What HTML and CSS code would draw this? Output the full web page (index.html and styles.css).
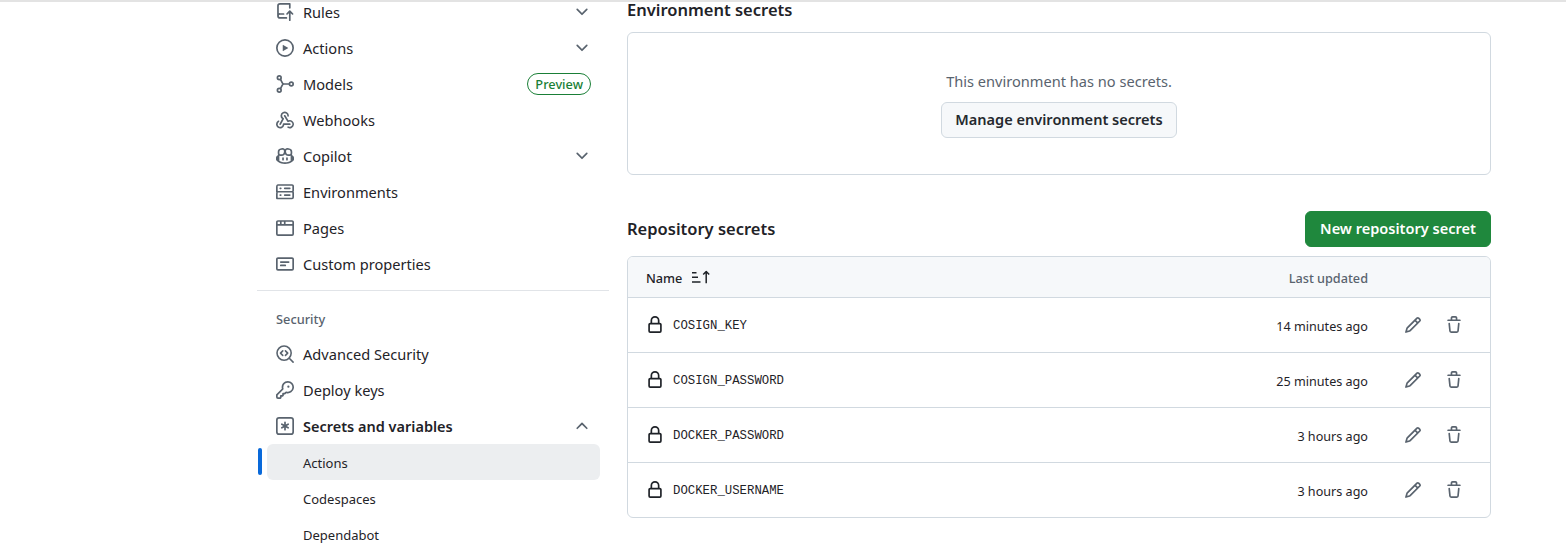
FILE: index.html
```html
<!DOCTYPE html>
<html lang="en">
<head>
  <meta charset="UTF-8" />
  <title>Actions secrets</title>
  <link rel="stylesheet" href="styles.css">
</head>
<body>

  <svg class="sprite" xmlns="http://www.w3.org/2000/svg">
    <symbol id="i-down" viewBox="0 0 16 16"><path d="M12.78 5.22a.749.749 0 0 1 0 1.06l-4.25 4.25a.749.749 0 0 1-1.06 0L3.22 6.28a.749.749 0 1 1 1.06-1.06L8 8.939l3.72-3.719a.749.749 0 0 1 1.06 0Z"/></symbol>
    <symbol id="i-up" viewBox="0 0 16 16"><path d="M3.22 10.53a.749.749 0 0 1 0-1.06l4.25-4.25a.749.749 0 0 1 1.06 0l4.25 4.25a.749.749 0 1 1-1.06 1.06L8 6.811 4.28 10.53a.749.749 0 0 1-1.06 0Z"/></symbol>
    <symbol id="i-rules" viewBox="0 0 16 16"><path d="M1 2.5A2.5 2.5 0 0 1 3.5 0h8.75a.75.75 0 0 1 .75.75v3.5a.75.75 0 0 1-1.5 0V1.5h-8a1 1 0 0 0-1 1v6.708A2.493 2.493 0 0 1 3.5 9h3.25a.75.75 0 0 1 0 1.5H3.5a1 1 0 0 0 0 2h5.75a.75.75 0 0 1 0 1.5H3.5A2.5 2.5 0 0 1 1 11.5Zm13.23 7.79h-.001l-1.224-1.224v6.184a.75.75 0 0 1-1.5 0V9.066L10.28 10.29a.75.75 0 0 1-1.06-1.06l2.505-2.504a.75.75 0 0 1 1.06 0L15.29 9.23a.75.75 0 0 1-1.06 1.06Z"/></symbol>
    <symbol id="i-play" viewBox="0 0 16 16"><path d="M8 0a8 8 0 1 1 0 16A8 8 0 0 1 8 0ZM1.5 8a6.5 6.5 0 1 0 13 0 6.5 6.5 0 0 0-13 0Zm4.879-2.773 4.264 2.559a.25.25 0 0 1 0 .428l-4.264 2.559A.25.25 0 0 1 6 10.559V5.442a.25.25 0 0 1 .379-.215Z"/></symbol>
    <symbol id="i-models" viewBox="0 0 16 16"><g fill="none" stroke="currentColor" stroke-width="1.5"><circle cx="2.9" cy="2.4" r="1.65"/><circle cx="2.9" cy="13.6" r="1.65"/><circle cx="13.6" cy="8" r="1.65"/><path d="M3.9 3.7 5.6 7c.3.6.7 1 1.4 1h4.9M3.9 12.3 5.6 9c.3-.6.7-1 1.4-1"/></g></symbol>
    <symbol id="i-webhook" viewBox="0 0 16 16"><path d="M5.5 4.25a2.25 2.25 0 0 1 4.5 0 .75.75 0 0 0 1.5 0 3.75 3.75 0 1 0-6.14 2.889l-2.272 4.258a.75.75 0 0 0 1.324.706L7 7.25a.75.75 0 0 0-.309-1.015A2.25 2.25 0 0 1 5.5 4.25Z"/><path d="M7.364 3.607a.75.75 0 0 1 1.03.257l2.608 4.349a3.75 3.75 0 1 1-.628 6.785.75.75 0 0 1 .752-1.299 2.25 2.25 0 1 0-.033-3.88.75.75 0 0 1-1.03-.256L7.107 4.636a.75.75 0 0 1 .257-1.03Z"/><path d="M2.9 8.776A.75.75 0 0 1 2.625 9.8 2.25 2.25 0 1 0 6 11.75a.75.75 0 0 1 .75-.751h5.5a.75.75 0 0 1 0 1.5H7.425a3.751 3.751 0 1 1-5.55-3.998.75.75 0 0 1 1.024.274Z"/></symbol>
    <symbol id="i-copilot" viewBox="0 0 16 16"><path d="M7.998 15.035c-4.562 0-7.873-2.914-7.998-3.749V9.338c.085-.628.677-1.686 1.588-2.065.013-.07.024-.143.036-.218.029-.183.06-.384.126-.612-.201-.508-.254-1.084-.254-1.656 0-.87.128-1.769.693-2.484.579-.733 1.494-1.124 2.724-1.261 1.206-.134 2.262.034 2.944.765.05.053.096.108.139.165.044-.057.094-.112.143-.165.682-.731 1.738-.899 2.944-.765 1.23.137 2.145.528 2.724 1.261.566.715.693 1.614.693 2.484 0 .572-.053 1.148-.254 1.656.066.228.098.429.126.612.012.076.024.148.037.218.924.385 1.522 1.471 1.591 2.095v1.872c0 .766-3.351 3.795-8.002 3.795Zm0-1.485c2.28 0 4.584-1.11 5.002-1.433V7.862l-.023-.116c-.49.21-1.075.291-1.727.291-1.146 0-2.059-.327-2.71-.991A3.222 3.222 0 0 1 8 6.303a3.24 3.24 0 0 1-.544.743c-.65.664-1.563.991-2.71.991-.652 0-1.236-.081-1.727-.291l-.023.116v4.255c.419.323 2.722 1.433 5.002 1.433ZM6.762 2.83c-.193-.206-.637-.413-1.682-.297-1.019.113-1.479.404-1.713.7-.247.312-.369.789-.369 1.554 0 .793.129 1.171.308 1.371.162.181.519.379 1.442.379.853 0 1.339-.235 1.638-.54.315-.322.527-.827.617-1.553.117-.935-.037-1.395-.241-1.614Zm4.155-.297c-1.044-.116-1.488.091-1.681.297-.204.219-.359.679-.242 1.614.091.726.303 1.231.618 1.553.299.305.784.54 1.638.54.922 0 1.28-.198 1.442-.379.179-.2.308-.578.308-1.371 0-.765-.123-1.242-.37-1.554-.233-.296-.693-.587-1.713-.7Z"/><path d="M6.25 9.037a.75.75 0 0 1 .75.75v1.501a.75.75 0 0 1-1.5 0V9.787a.75.75 0 0 1 .75-.75Zm4.25.75v1.501a.75.75 0 0 1-1.5 0V9.787a.75.75 0 0 1 1.5 0Z"/></symbol>
    <symbol id="i-server" viewBox="0 0 16 16"><path d="M1.75 1h12.5c.966 0 1.75.784 1.75 1.75v4c0 .372-.116.717-.314 1 .198.283.314.628.314 1v4a1.75 1.75 0 0 1-1.75 1.75H1.75A1.75 1.75 0 0 1 0 13.75v-4c0-.372.116-.717.314-1a1.739 1.739 0 0 1-.314-1v-4C0 1.784.784 1 1.75 1ZM1.5 2.75v4c0 .138.112.25.25.25h12.5a.25.25 0 0 0 .25-.25v-4a.25.25 0 0 0-.25-.25H1.75a.25.25 0 0 0-.25.25Zm.25 5.75a.25.25 0 0 0-.25.25v4c0 .138.112.25.25.25h12.5a.25.25 0 0 0 .25-.25v-4a.25.25 0 0 0-.25-.25ZM7 4.75A.75.75 0 0 1 7.75 4h4.5a.75.75 0 0 1 0 1.5h-4.5A.75.75 0 0 1 7 4.75ZM7.75 10h4.5a.75.75 0 0 1 0 1.5h-4.5a.75.75 0 0 1 0-1.5ZM3 4.75A.75.75 0 0 1 3.75 4h.5a.75.75 0 0 1 0 1.5h-.5A.75.75 0 0 1 3 4.75ZM3.75 10h.5a.75.75 0 0 1 0 1.5h-.5a.75.75 0 0 1 0-1.5Z"/></symbol>
    <symbol id="i-browser" viewBox="0 0 16 16"><path d="M0 2.75C0 1.784.784 1 1.75 1h12.5c.966 0 1.75.784 1.75 1.75v10.5A1.75 1.75 0 0 1 14.25 15H1.75A1.75 1.75 0 0 1 0 13.25ZM14.5 6h-13v7.25c0 .138.112.25.25.25h12.5a.25.25 0 0 0 .25-.25Zm-6-3.5v2h6V2.75a.25.25 0 0 0-.25-.25ZM5 2.5v2h2v-2Zm-3.25 0a.25.25 0 0 0-.25.25V4.5h2v-2Z"/></symbol>
    <symbol id="i-note" viewBox="0 0 16 16"><path d="M0 3.75C0 2.784.784 2 1.75 2h12.5c.966 0 1.75.784 1.75 1.75v8.5A1.75 1.75 0 0 1 14.25 14H1.75A1.75 1.75 0 0 1 0 12.25Zm1.75-.25a.25.25 0 0 0-.25.25v8.5c0 .138.112.25.25.25h12.5a.25.25 0 0 0 .25-.25v-8.5a.25.25 0 0 0-.25-.25ZM3.5 6.25a.75.75 0 0 1 .75-.75h7a.75.75 0 0 1 0 1.5h-7a.75.75 0 0 1-.75-.75Zm.75 2.25h4a.75.75 0 0 1 0 1.5h-4a.75.75 0 0 1 0-1.5Z"/></symbol>
    <symbol id="i-scan" viewBox="0 0 16 16"><g fill="none" stroke="currentColor" stroke-width="1.4" stroke-linecap="round" stroke-linejoin="round"><circle cx="7.2" cy="7.2" r="6.3"/><path d="m11.8 11.8 3.4 3.4M6 5.2 4 7.2l2 2M8.4 5.2l2 2-2 2"/></g></symbol>
    <symbol id="i-key" viewBox="0 0 16 16"><path d="M10.5 0a5.499 5.499 0 1 1-1.288 10.848l-.932.932a.749.749 0 0 1-.53.22H7v.75a.749.749 0 0 1-.22.53l-.5.5a.749.749 0 0 1-.53.22H5v.75a.749.749 0 0 1-.22.53l-.5.5a.749.749 0 0 1-.53.22h-2A1.75 1.75 0 0 1 0 14.25v-2c0-.199.079-.389.22-.53l4.932-4.932A5.5 5.5 0 0 1 10.5 0Zm-4 5.5c-.001.431.069.86.205 1.269a.75.75 0 0 1-.181.768L1.5 12.56v1.69c0 .138.112.25.25.25h1.69l.06-.06v-1.19a.75.75 0 0 1 .75-.75h1.19l.06-.06v-1.19a.75.75 0 0 1 .75-.75h1.19l1.023-1.025a.75.75 0 0 1 .768-.18A4 4 0 1 0 6.5 5.5ZM11 6a1 1 0 1 1 0-2 1 1 0 0 1 0 2Z"/></symbol>
    <symbol id="i-asterisk" viewBox="0 0 16 16"><path d="M0 2.75A2.75 2.75 0 0 1 2.75 0h10.5A2.75 2.75 0 0 1 16 2.75v10.5A2.75 2.75 0 0 1 13.25 16H2.75A2.75 2.75 0 0 1 0 13.25ZM2.75 1.5c-.69 0-1.25.56-1.25 1.25v10.5c0 .69.56 1.25 1.25 1.25h10.5c.69 0 1.25-.56 1.25-1.25V2.75c0-.69-.56-1.25-1.25-1.25Z"/><path d="M8 4a.75.75 0 0 1 .75.75V6.7l1.69-.975a.75.75 0 0 1 .75 1.3L9.5 8l1.69.976a.75.75 0 0 1-.75 1.298L8.75 9.299v1.951a.75.75 0 0 1-1.5 0V9.3l-1.69.975a.751.751 0 0 1-.75-1.3L6.5 8l-1.69-.975a.75.75 0 0 1 .75-1.3l1.69.976V4.75A.75.75 0 0 1 8 4Z"/></symbol>
    <symbol id="i-sort" viewBox="0 0 20 16"><g fill="none" stroke="currentColor" stroke-width="1.5"><path d="M2 2.7h4.5M2 7.3h6M2 12h8.5"/><path d="M16.2 13.3V1.6M13.2 4.5l3-3 3 3" stroke-linejoin="round"/></g></symbol>
    <symbol id="i-lock" viewBox="0 0 16 16"><path d="M4 4a4 4 0 0 1 8 0v2h.25c.966 0 1.75.784 1.75 1.75v5.5A1.75 1.75 0 0 1 12.25 15h-8.5A1.75 1.75 0 0 1 2 13.25v-5.5C2 6.784 2.784 6 3.75 6H4Zm8.25 3.5h-8.5a.25.25 0 0 0-.25.25v5.5c0 .138.112.25.25.25h8.5a.25.25 0 0 0 .25-.25v-5.5a.25.25 0 0 0-.25-.25ZM10.5 6V4a2.5 2.5 0 1 0-5 0v2Z"/></symbol>
    <symbol id="i-pencil" viewBox="0 0 16 16"><path d="M11.013 1.427a1.75 1.75 0 0 1 2.474 0l1.086 1.086a1.75 1.75 0 0 1 0 2.474l-8.61 8.61c-.21.21-.47.364-.756.445l-3.251.93a.75.75 0 0 1-.927-.928l.929-3.25c.081-.286.235-.547.445-.758l8.61-8.61Zm.176 4.823L9.75 4.81l-6.286 6.287a.253.253 0 0 0-.064.108l-.558 1.953 1.953-.558a.253.253 0 0 0 .108-.064Zm1.238-3.763a.25.25 0 0 0-.354 0L10.811 3.75l1.439 1.44 1.263-1.263a.25.25 0 0 0 0-.354Z"/></symbol>
    <symbol id="i-trash" viewBox="0 0 16 16"><path d="M11 1.75V3h2.25a.75.75 0 0 1 0 1.5H2.75a.75.75 0 0 1 0-1.5H5V1.75C5 .784 5.784 0 6.75 0h2.5C10.216 0 11 .784 11 1.75ZM4.496 6.675l.66 6.6a.25.25 0 0 0 .249.225h5.19a.25.25 0 0 0 .249-.225l.66-6.6a.75.75 0 0 1 1.492.149l-.66 6.6A1.748 1.748 0 0 1 10.595 15h-5.19a1.75 1.75 0 0 1-1.741-1.575l-.66-6.6a.75.75 0 1 1 1.492-.15ZM6.5 1.75V3h3V1.75a.25.25 0 0 0-.25-.25h-2.5a.25.25 0 0 0-.25.25Z"/></symbol>
  </svg>

  <div class="topline"></div>

  <div class="layout">
    <nav class="sidebar">
      <a class="nav-item"><svg class="icon"><use href="#i-rules"/></svg><span class="nav-label">Rules</span><svg class="icon"><use href="#i-down"/></svg></a>
      <a class="nav-item"><svg class="icon"><use href="#i-play"/></svg><span class="nav-label">Actions</span><svg class="icon"><use href="#i-down"/></svg></a>
      <a class="nav-item"><svg class="icon"><use href="#i-models"/></svg><span class="nav-label">Models</span><span class="badge">Preview</span></a>
      <a class="nav-item"><svg class="icon"><use href="#i-webhook"/></svg><span class="nav-label">Webhooks</span></a>
      <a class="nav-item"><svg class="icon"><use href="#i-copilot"/></svg><span class="nav-label">Copilot</span><svg class="icon"><use href="#i-down"/></svg></a>
      <a class="nav-item"><svg class="icon"><use href="#i-server"/></svg><span class="nav-label">Environments</span></a>
      <a class="nav-item"><svg class="icon"><use href="#i-browser"/></svg><span class="nav-label">Pages</span></a>
      <a class="nav-item"><svg class="icon"><use href="#i-note"/></svg><span class="nav-label">Custom properties</span></a>

      <div class="nav-divider"></div>
      <div class="nav-group">Security</div>

      <a class="nav-item"><svg class="icon"><use href="#i-scan"/></svg><span class="nav-label">Advanced Security</span></a>
      <a class="nav-item"><svg class="icon"><use href="#i-key"/></svg><span class="nav-label">Deploy keys</span></a>
      <a class="nav-item nav-open"><svg class="icon"><use href="#i-asterisk"/></svg><span class="nav-label">Secrets and variables</span><svg class="icon"><use href="#i-up"/></svg></a>
      <div class="sub-wrap">
        <span class="sub-marker"></span>
        <a class="nav-item sub-item sub-active">Actions</a>
      </div>
      <a class="nav-item sub-item">Codespaces</a>
      <a class="nav-item sub-item">Dependabot</a>
    </nav>

    <main class="main">
      <h2 class="section-title first-title">Environment secrets</h2>
      <div class="empty-box">
        <p class="empty-text">This environment has no secrets.</p>
        <button class="btn">Manage environment secrets</button>
      </div>

      <div class="section-head">
        <h2 class="section-title">Repository secrets</h2>
        <button class="btn btn-green">New repository secret</button>
      </div>

      <div class="table">
        <div class="table-head">
          <span class="col-name">Name</span>
          <svg class="sort-icon"><use href="#i-sort"/></svg>
          <span class="col-updated">Last updated</span>
        </div>
        <div class="table-row">
          <svg class="icon lock"><use href="#i-lock"/></svg>
          <code class="secret-name">COSIGN_KEY</code>
          <span class="updated">14 minutes ago</span>
          <span class="actions"><svg class="icon"><use href="#i-pencil"/></svg><svg class="icon"><use href="#i-trash"/></svg></span>
        </div>
        <div class="table-row">
          <svg class="icon lock"><use href="#i-lock"/></svg>
          <code class="secret-name">COSIGN_PASSWORD</code>
          <span class="updated">25 minutes ago</span>
          <span class="actions"><svg class="icon"><use href="#i-pencil"/></svg><svg class="icon"><use href="#i-trash"/></svg></span>
        </div>
        <div class="table-row">
          <svg class="icon lock"><use href="#i-lock"/></svg>
          <code class="secret-name">DOCKER_PASSWORD</code>
          <span class="updated">3 hours ago</span>
          <span class="actions"><svg class="icon"><use href="#i-pencil"/></svg><svg class="icon"><use href="#i-trash"/></svg></span>
        </div>
        <div class="table-row">
          <svg class="icon lock"><use href="#i-lock"/></svg>
          <code class="secret-name">DOCKER_USERNAME</code>
          <span class="updated">3 hours ago</span>
          <span class="actions"><svg class="icon"><use href="#i-pencil"/></svg><svg class="icon"><use href="#i-trash"/></svg></span>
        </div>
      </div>
    </main>
  </div>

</body>
</html>
```

FILE: styles.css
```css
html,
body {
  height: 552px;
  overflow: hidden;
}

body {
  margin: 0;
  background: #fff;
  color: #1f2328;
  font-family: "Noto Sans", "Liberation Sans", sans-serif;
  font-size: 14.6px;
}

.sprite {
  display: none;
}

/* grey line left over from the sticky header */
.topline {
  position: relative;
  z-index: 1;
  height: 2px;
  background: #e3e3e3;
}

.layout {
  display: flex;
  gap: 18px;
  padding-left: 257px;
}

.icon {
  width: 18px;
  height: 18px;
  flex: none;
  fill: #59636e;
  color: #59636e;
}

/* Sidebar */
.sidebar {
  width: 352px;
  margin-top: -8px;
}

.nav-item {
  display: flex;
  align-items: center;
  height: 36px;
  padding: 0 18px 0 19px;
  color: #1f2328;
}

.nav-label {
  flex: 1;
  margin-left: 9px;
}

.nav-open .nav-label {
  font-size: 14.5px;
  font-weight: 600;
}

.badge {
  height: 20px;
  padding: 0 7px;
  border: 1px solid #1a7f37;
  border-radius: 11px;
  color: #1a7f37;
  font-size: 12.8px;
  font-weight: 500;
  line-height: 21px;
}

.nav-divider {
  height: 1px;
  margin-top: 8px;
  background: #e1e4e8;
}

.nav-group {
  height: 45px;
  padding-left: 19px;
  color: #59636e;
  font-size: 12.8px;
  font-weight: 500;
  line-height: 57px;
}

.sub-item {
  box-sizing: border-box;
  padding-top: 2px;
  padding-left: 46px;
  font-size: 13px;
}

.sub-wrap {
  position: relative;
}

.sub-marker {
  position: absolute;
  left: 1px;
  top: 4px;
  width: 4px;
  height: 27px;
  border-radius: 2px;
  background: #0969da;
}

.sub-active {
  margin: 0 9px 0 10px;
  padding-left: 36px;
  border-radius: 6px;
  background: #eceef0;
}

/* Main column */
.main {
  width: 864px;
}

.section-title {
  margin: 0;
  font-size: 16.5px;
  font-weight: 600;
  line-height: 24px;
}

.first-title {
  margin-top: -4px;
  margin-bottom: 10px;
}

.empty-box {
  display: flex;
  flex-direction: column;
  align-items: center;
  height: 143px;
  box-sizing: border-box;
  border: 1px solid #d1d9e0;
  border-radius: 6px;
}

.empty-text {
  margin: 37px 0 10px;
  color: #59636e;
  line-height: 22px;
}

.btn {
  height: 36px;
  padding: 0 13px 2px;
  border: 1px solid #d1d9e0;
  border-radius: 6px;
  background: #f6f8fa;
  color: #25292e;
  font-family: inherit;
  font-size: 14.55px;
  font-weight: 600;
}

.btn-green {
  padding: 0 14px 2px;
  border-color: #1f883d;
  background: #1f883d;
  color: #fff;
}

.section-head {
  display: flex;
  justify-content: space-between;
  align-items: center;
  margin-top: 36px;
  margin-bottom: 9px;
}

.table {
  border: 1px solid #d1d9e0;
  border-radius: 6px;
  overflow: hidden;
}

.table-head {
  display: flex;
  align-items: center;
  box-sizing: border-box;
  height: 40px;
  padding: 2px 122px 0 18px;
  background: #f6f8fa;
  font-size: 12.7px;
}

.col-name {
  font-weight: 500;
}

.sort-icon {
  width: 20px;
  height: 16px;
  margin-left: 8px;
  color: #1f2328;
}

.col-updated {
  margin-left: auto;
  color: #59636e;
  font-weight: 500;
}

.table-row {
  display: flex;
  align-items: center;
  height: 54px;
  padding: 0 27px 0 18px;
  border-top: 1px solid #d1d9e0;
}

.lock {
  margin-top: -1px;
  fill: #1f2328;
}

.secret-name {
  margin: 2px 0 0 9px;
  font-family: "Liberation Mono", monospace;
  font-size: 12.33px;
}

.updated {
  margin-left: auto;
  padding-top: 2px;
  font-size: 12.6px;
}

.actions {
  display: flex;
  gap: 23px;
  margin-left: 36px;
}
```
